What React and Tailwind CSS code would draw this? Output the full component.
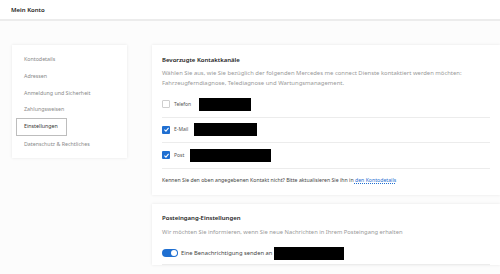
const navItems = [
  "Kontodetails",
  "Adressen",
  "Anmeldung und Sicherheit",
  "Zahlungsweisen",
  "Einstellungen",
  "Datenschutz & Rechtliches",
];

const channels = [
  { label: "Telefon", checked: false, box: "ml-[8px] w-[52px]" },
  { label: "E-Mail", checked: true, box: "ml-[6px] w-[63px]" },
  { label: "Post", checked: true, box: "ml-[6px] w-[81px]" },
];

const Checkbox = ({ checked }) =>
  checked ? (
    <span className="flex h-[8px] w-[8px] items-center justify-center rounded-[1px] bg-[#1f6fd1]">
      <svg viewBox="0 0 10 10" className="h-[7px] w-[7px]">
        <path d="M2 5.2 L4.2 7.3 L8 2.8" fill="none" stroke="#fff" strokeWidth="1.5" />
      </svg>
    </span>
  ) : (
    <span className="h-[8px] w-[8px] rounded-[1px] border border-[#cfcfcf] bg-white" />
  );

export default function App() {
  return (
    <div
      className="h-[274px] w-[500px] overflow-hidden bg-[#fcfcfc] text-[#333]"
      style={{ fontFamily: '"Noto Sans", "Open Sans", sans-serif' }}
    >
      <header className="h-[21px] border-b-2 border-[#ececec] bg-white pl-[11px] pt-[6px]">
        <h1 className="text-[6px] font-semibold leading-[8px] text-[#222]">Mein Konto</h1>
      </header>

      <div className="flex gap-[25px] pl-[12px] pt-[24px]">
        <nav className="h-[113px] w-[115px] shrink-0 bg-white pt-[7px] shadow-[0_0_3px_rgba(0,0,0,0.09)]">
          <ul className="flex flex-col">
            {navItems.map((item) =>
              item === "Einstellungen" ? (
                <li key={item} className="ml-[4px] flex h-[18px] w-[51px] items-center border border-[#bdbdbd] pl-[7px] text-[5.3px] text-[#333]">
                  {item}
                </li>
              ) : (
                <li key={item} className="flex h-[16.6px] items-center pl-[12px] text-[5.3px] text-[#888]">
                  {item}
                </li>
              )
            )}
          </ul>
        </nav>

        <main className="flex flex-1 flex-col gap-[9px]">
          <section className="h-[150px] bg-white pl-[10px] pr-[10px] pt-[11px] shadow-[0_0_3px_rgba(0,0,0,0.09)]">
            <h2 className="text-[6px] font-semibold leading-[9px] text-[#222]">Bevorzugte Kontaktkanäle</h2>
            <p className="mt-[3px] text-[5.9px] leading-[10px] text-[#999]">
              Wählen Sie aus, wie Sie bezüglich der folgenden Mercedes me connect Dienste kontaktiert werden möchten:
              <br />
              Fahrzeugferndiagnose, Telediagnose und Wartungsmanagement.
            </p>
            <div className="mt-[4px] flex flex-col">
              {channels.map((c) => (
                <div key={c.label} className="flex h-[25.5px] items-center border-b border-[#ececec]">
                  <Checkbox checked={c.checked} />
                  <span className="ml-[4px] text-[5px] text-[#555]">{c.label}</span>
                  <span className={`h-[13px] bg-black ${c.box}`} />
                </div>
              ))}
            </div>
            <p className="mt-[8px] text-[5.2px] text-[#444]">
              Kennen Sie den oben angegebenen Kontakt nicht? Bitte aktualisieren Sie ihn in{" "}
              <a className="text-[#1f6fd1] underline decoration-dotted">den Kontodetails</a>
            </p>
          </section>

          <section className="flex-1 bg-white pl-[10px] pr-[10px] pt-[10px] shadow-[0_0_3px_rgba(0,0,0,0.09)]">
            <h2 className="text-[6px] font-semibold leading-[9px] text-[#222]">Posteingang-Einstellungen</h2>
            <p className="mt-[4px] text-[5.8px] leading-[10px] text-[#999]">
              Wir möchten Sie informieren, wenn Sie neue Nachrichten in Ihrem Posteingang erhalten
            </p>
            <div className="mt-[5px] flex h-[23px] items-center border-b border-[#ececec]">
              <span className="flex h-[8px] w-[16px] items-center justify-end rounded-full bg-[#1f6fd1] pr-[1px]">
                <span className="h-[6px] w-[6px] rounded-full bg-white" />
              </span>
              <span className="ml-[3px] text-[5.8px] text-[#444]">Eine Benachrichtigung senden an</span>
              <span className="ml-[2px] h-[13px] w-[70px] bg-black" />
            </div>
          </section>
        </main>
      </div>
    </div>
  );
}
